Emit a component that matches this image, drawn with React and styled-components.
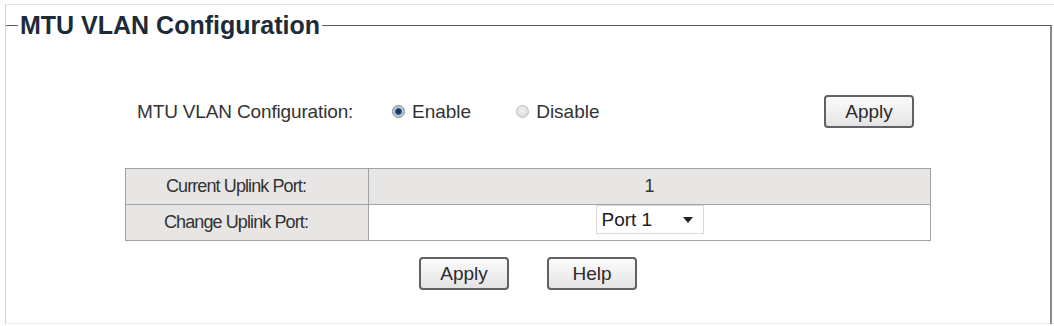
import React from 'react';
import styled, { createGlobalStyle } from 'styled-components';

const GlobalStyle = createGlobalStyle`
  html, body {
    margin: 0;
    padding: 0;
    background: #fff;
  }
  body {
    font-family: "Liberation Sans", Arial, sans-serif;
    color: #333;
  }
`;

const Frame = styled.div`
  margin: 4px 0 0 5px;
  height: 320px;
  box-sizing: border-box;
  border-top: 1px solid #e2e2e2;
  border-left: 1px solid #d2d2d2;
  border-bottom: 1px solid #ececec;
`;

const Fieldset = styled.fieldset`
  margin: 0;
  padding: 0 0 34px 0;
  width: 1046px;
  box-sizing: border-box;
  border: none;
  border-top: 1px solid #5a5a5a;
  border-right: 2px solid #8a8a8a;
`;

const Legend = styled.legend`
  margin-left: 12px;
  padding: 0 2px 0 2px;
  font-size: 25px;
  line-height: 41px;
  font-weight: bold;
  color: #1d2b38;
`;

const OptionRow = styled.div`
  display: flex;
  align-items: center;
  height: 33px;
  margin-top: 49px;
  padding-left: 131px;
  padding-right: 136px;
`;

const FieldLabel = styled.span`
  width: 255px;
  font-size: 19px;
  color: #333;
  letter-spacing: -0.15px;
`;

const Choice = styled.label`
  display: flex;
  align-items: center;
  gap: 7px;
  font-size: 19px;
  color: #333;
  margin-right: ${p => p.$gap || 0}px;
`;

const Radio = styled.span`
  display: inline-block;
  width: 13px;
  height: 13px;
  border-radius: 50%;
  box-sizing: border-box;
  border: 1px solid ${p => (p.$checked ? '#7d838b' : '#bdbdbd')};
  background: ${p =>
    p.$checked
      ? 'radial-gradient(circle at 50% 50%, #0e2c52 0, #1c4a7e 2.8px, #b9c0c8 3.8px, #e8ebee 100%)'
      : 'radial-gradient(circle at 45% 40%, #f2f2f2 0, #d2d2d2 100%)'};
`;

const Button = styled.button`
  width: ${p => p.$w || 90}px;
  height: 33px;
  margin-left: ${p => (p.$push ? 'auto' : '0')};
  box-sizing: border-box;
  border: 2px solid #5e6166;
  border-radius: 4px;
  background: linear-gradient(#fbfbfb, #e4e4e4);
  font-family: "Liberation Sans", Arial, sans-serif;
  font-size: 19px;
  color: #2a2a2a;
  padding: 0;
`;

const Table = styled.table`
  margin: 40px 0 0 119px;
  width: 806px;
  border-collapse: collapse;
`;

const Cell = styled.td`
  height: 36px;
  padding: ${p => (p.$label ? '0 22px 0 0' : '0')};
  box-sizing: border-box;
  border: 1px solid #a2a2a2;
  text-align: center;
  vertical-align: ${p => (p.$top ? 'top' : 'middle')};
  font-size: 18px;
  letter-spacing: ${p => (p.$label ? '-0.9px' : '0')};
  color: #333;
  background: ${p => (p.$shade ? '#e8e6e4' : '#fff')};
  width: ${p => (p.$label ? '243px' : 'auto')};
`;

const Select = styled.div`
  display: inline-flex;
  align-items: center;
  justify-content: space-between;
  width: 108px;
  height: 29px;
  box-sizing: border-box;
  padding: 0 10px 0 5px;
  border: 1px solid #dadada;
  background: #fff;
  font-size: 19px;
  color: #222;
  text-align: left;
`;

const Caret = styled.span`
  width: 0;
  height: 0;
  border-left: 5px solid transparent;
  border-right: 5px solid transparent;
  border-top: 6px solid #222;
`;

const Actions = styled.div`
  display: flex;
  justify-content: center;
  gap: 38px;
  width: 806px;
  margin: 16px 0 0 119px;
`;

export default function App() {
  return (
    <>
      <GlobalStyle />
      <Frame>
        <Fieldset>
          <Legend>MTU VLAN Configuration</Legend>
          <OptionRow>
            <FieldLabel>MTU VLAN Configuration:</FieldLabel>
            <Choice $gap={45}>
              <Radio $checked />
              Enable
            </Choice>
            <Choice>
              <Radio />
              Disable
            </Choice>
            <Button $push>Apply</Button>
          </OptionRow>
          <Table>
            <tbody>
              <tr>
                <Cell $label $shade>Current Uplink Port:</Cell>
                <Cell $shade>1</Cell>
              </tr>
              <tr>
                <Cell $label $shade>Change Uplink Port:</Cell>
                <Cell $top>
                  <Select>
                    Port 1
                    <Caret />
                  </Select>
                </Cell>
              </tr>
            </tbody>
          </Table>
          <Actions>
            <Button>Apply</Button>
            <Button>Help</Button>
          </Actions>
        </Fieldset>
      </Frame>
    </>
  );
}
